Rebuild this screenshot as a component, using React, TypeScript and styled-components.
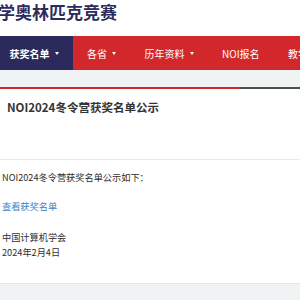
import React from "react";
import styled, { createGlobalStyle } from "styled-components";

const GlobalStyle = createGlobalStyle`
    html, body {
        margin: 0;
        padding: 0;
        background: #fff;
        overflow: hidden;
    }
    body {
        font-family: "Noto Sans CJK SC", "Noto Sans", sans-serif;
        color: #333;
    }
`;

const Page = styled.div`
    width: 300px;
    height: 300px;
    overflow: hidden;
    display: flex;
    flex-direction: column;
`;

const Header = styled.div`
    height: 36px;
    display: flex;
    align-items: flex-start;
    white-space: nowrap;
`;

const SiteTitle = styled.h1`
    margin: 0 0 0 -121px;
    font-size: 17px;
    line-height: 23px;
    font-weight: 700;
    color: #2c2b5e;
`;

const NavBar = styled.nav`
    height: 34px;
    display: flex;
    background: #d3282b;
    margin-left: -5px;
    white-space: nowrap;
`;

const NavItem = styled.div<{ $active?: boolean }>`
    display: flex;
    align-items: center;
    gap: 5px;
    padding: 0 14px 0 14.5px;
    font-size: 10px;
    color: #fff;
    font-weight: ${(p) => (p.$active ? 700 : 400)};
    background: ${(p) => (p.$active ? "#2c2a5c" : "transparent")};
`;

const Caret = styled.span`
    width: 0;
    height: 0;
    border-left: 2.5px solid transparent;
    border-right: 2.5px solid transparent;
    border-top: 3px solid #fff;
`;

const SubBand = styled.div`
    height: 17px;
    background: #f0f3f4;
`;

const Progress = styled.div`
    height: 2px;
    display: flex;
    background: #4b5050;
`;

const ProgressFill = styled.div`
    height: 100%;
    background: #d3282b;
`;

const Heading = styled.h2`
    margin: 0;
    padding: 10px 0 0 7px;
    height: 60px;
    font-size: 11.5px;
    line-height: 16px;
    font-weight: 700;
    color: #333;
    border-bottom: 1px solid #e9eaea;
    white-space: nowrap;
`;

const Body = styled.div`
    flex: 1;
    padding: 10px 0 0 2px;
    font-size: 9.2px;
    line-height: 15px;
    color: #2e2e2e;
`;

const Para = styled.p<{ $gap?: number }>`
    margin: 0 0 ${(p) => p.$gap ?? 14}px;
    white-space: nowrap;
`;

const Link = styled.a`
    color: #3a85c8;
    text-decoration: none;
`;

const Footer = styled.div`
    height: 16px;
    background: #f0f3f4;
    border-top: 1px solid #e4e6e7;
`;

const navItems = [
    { label: "获奖名单", caret: true, active: true },
    { label: "各省", caret: true },
    { label: "历年资料", caret: true },
    { label: "NOI报名" },
    { label: "教学资源" },
];

export default function App() {
    return (
        <Page>
            <GlobalStyle />
            <Header>
                <SiteTitle>全国青少年信息学奥林匹克竞赛</SiteTitle>
            </Header>
            <NavBar>
                {navItems.map((item) => (
                    <NavItem key={item.label} $active={item.active}>
                        {item.label}
                        {item.caret && <Caret />}
                    </NavItem>
                ))}
            </NavBar>
            <SubBand />
            <Progress>
                <ProgressFill style={{ width: "80%" }} />
            </Progress>
            <Heading>NOI2024冬令营获奖名单公示</Heading>
            <Body>
                <Para>NOI2024冬令营获奖名单公示如下：</Para>
                <Para $gap={16}>
                    <Link href="#">查看获奖名单</Link>
                </Para>
                <Para>
                    中国计算机学会
                    <br />
                    2024年2月4日
                </Para>
            </Body>
            <Footer />
        </Page>
    );
}
